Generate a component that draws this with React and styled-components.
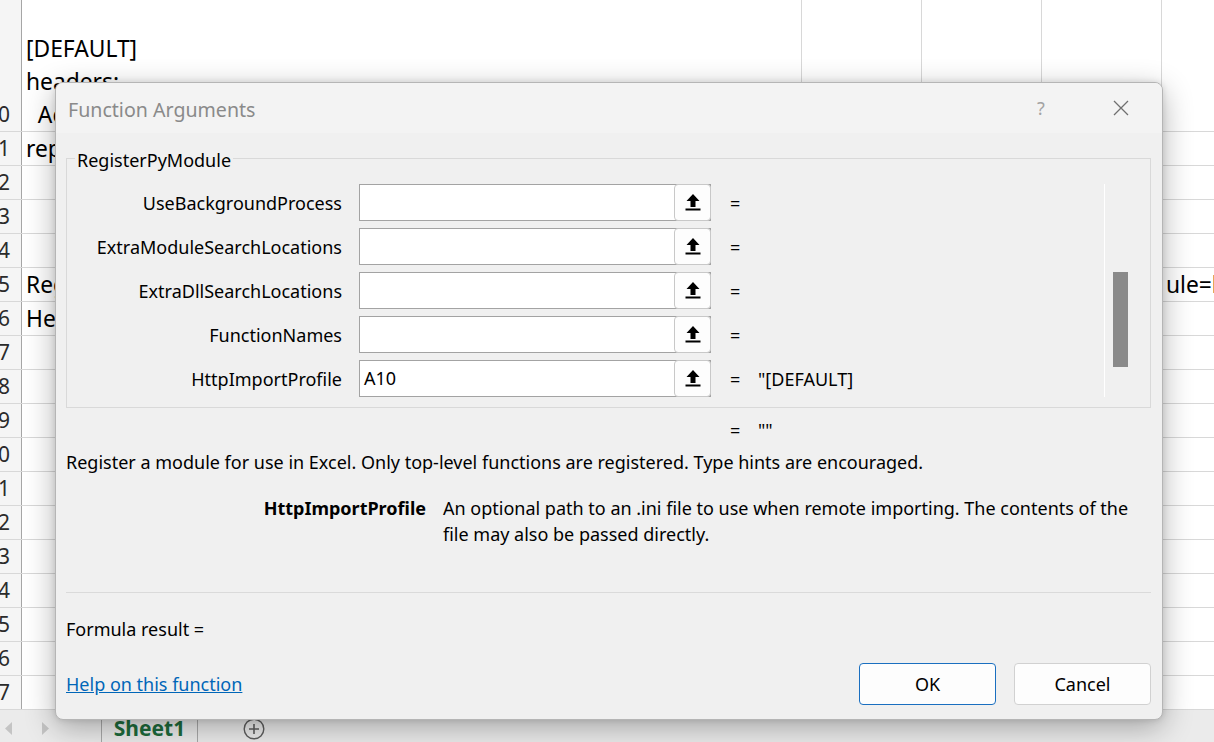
import React from 'react'
import styled, { createGlobalStyle } from 'styled-components'

const GlobalStyle = createGlobalStyle`
  html, body { margin: 0; padding: 0; }
  body { font-family: "Noto Sans", "Open Sans", sans-serif; background: #fff; }
  * { box-sizing: border-box; }
`

const sheetRows = [
    { n: 10, h: 132, a: '[DEFAULT]\nheaders:\n  Accept: text/plain' },
    { n: 11, a: 'replace = true' },
    { n: 12 },
    { n: 13 },
    { n: 14 },
    { n: 15, a: 'RegisterPyModule', e: 'ule=https://example.org/module.py' },
    { n: 16, a: 'Help' },
    { n: 17 }, { n: 18 }, { n: 19 }, { n: 20 }, { n: 21 }, { n: 22 },
    { n: 23 }, { n: 24 }, { n: 25 }, { n: 26 }, { n: 27 },
]

const args = [
    { name: 'UseBackgroundProcess', value: '', result: '' },
    { name: 'ExtraModuleSearchLocations', value: '', result: '' },
    { name: 'ExtraDllSearchLocations', value: '', result: '' },
    { name: 'FunctionNames', value: '', result: '' },
    { name: 'HttpImportProfile', value: 'A10', result: '"[DEFAULT]' },
]

function PickIcon() {
    return (
        <svg width="16" height="17" viewBox="0 0 16 17">
            <polygon points="8,0 14.5,7 10.5,7 10.5,13 5.5,13 5.5,7 1.5,7" fill="#000" />
            <rect x="0.5" y="14.5" width="15" height="2" fill="#000" />
        </svg>
    )
}

function CloseIcon() {
    return (
        <svg width="16" height="16" viewBox="0 0 16 16">
            <path d="M1 1 L15 15 M15 1 L1 15" stroke="#6f6f6f" strokeWidth="1.3" fill="none" />
        </svg>
    )
}

function App() {
    return (
        <Page>
            <GlobalStyle />
            <Sheet>
                {sheetRows.map((r) => (
                    <SheetRow key={r.n} $h={r.h || 34}>
                        <RowHead><span>{r.n}</span></RowHead>
                        <Cell $w={780}>{r.a}</Cell>
                        <Cell $w={120} />
                        <Cell $w={120} />
                        <Cell $w={120} />
                        <Cell $last>{r.e}</Cell>
                    </SheetRow>
                ))}
            </Sheet>
            <TabBar>
                <NavGroup>
                    <svg width="8" height="13" viewBox="0 0 8 13"><polygon points="7,0 7,13 0,6.5" fill="#c4c4c4" /></svg>
                    <svg width="8" height="13" viewBox="0 0 8 13"><polygon points="0,0 0,13 7,6.5" fill="#c4c4c4" /></svg>
                </NavGroup>
                <SheetTab>Sheet1</SheetTab>
                <AddSheet>
                    <svg width="22" height="22" viewBox="0 0 22 22">
                        <circle cx="11" cy="11" r="9.8" stroke="#5e5e5e" strokeWidth="1.4" fill="none" />
                        <path d="M11 6 V16 M6 11 H16" stroke="#5e5e5e" strokeWidth="1.6" />
                    </svg>
                </AddSheet>
            </TabBar>

            <Dialog>
                <TitleBar>
                    <Title>Function Arguments</Title>
                    <TitleButton $muted>?</TitleButton>
                    <TitleButton><CloseIcon /></TitleButton>
                </TitleBar>
                <Body>
                    <Group>
                        <legend>RegisterPyModule</legend>
                        <ArgArea>
                            <ArgList>
                                {args.map((a) => (
                                    <ArgRow key={a.name}>
                                        <ArgLabel>{a.name}</ArgLabel>
                                        <InputBox>
                                            <Field>{a.value}</Field>
                                            <PickButton><PickIcon /></PickButton>
                                        </InputBox>
                                        <Eq>=</Eq>
                                        <span>{a.result}</span>
                                    </ArgRow>
                                ))}
                            </ArgList>
                            <ScrollTrack>
                                <ScrollThumb />
                            </ScrollTrack>
                        </ArgArea>
                    </Group>
                    <ResultLine>
                        <Eq>=</Eq>
                        <span>""</span>
                    </ResultLine>
                    <Description>
                        Register a module for use in Excel. Only top-level functions are registered. Type hints are encouraged.
                    </Description>
                    <ArgHelp>
                        <HelpName>HttpImportProfile</HelpName>
                        <HelpText>
                            An optional path to an .ini file to use when remote importing. The contents of the file may also be passed directly.
                        </HelpText>
                    </ArgHelp>
                    <Divider />
                    <FormulaResult>Formula result =</FormulaResult>
                    <Footer>
                        <HelpLink href="#">Help on this function</HelpLink>
                        <Button $primary>OK</Button>
                        <Button>Cancel</Button>
                    </Footer>
                </Body>
            </Dialog>
        </Page>
    )
}

export default App

const Page = styled.div`
    position: relative;
    width: 1214px;
    height: 742px;
    overflow: hidden;
    display: flex;
    flex-direction: column;
    background: #fff;
`

const Sheet = styled.div`
    display: flex;
    flex-direction: column;
`

const SheetRow = styled.div`
    display: flex;
    height: ${(p) => p.$h}px;
    flex: none;
    border-bottom: 1px solid #d8d8d8;
`

const RowHead = styled.div`
    width: 22px;
    flex: none;
    display: flex;
    justify-content: flex-end;
    align-items: flex-end;
    overflow: hidden;
    padding-right: 11px;
    background: #f5f5f5;
    border-right: 1px solid #a6a6a6;
    font-size: 21px;
    line-height: 33px;
    color: #2b2b2b;
    white-space: nowrap;
`

const Cell = styled.div`
    width: ${(p) => (p.$w ? `${p.$w}px` : 'auto')};
    flex: ${(p) => (p.$last ? '1' : 'none')};
    display: flex;
    align-items: flex-end;
    padding: 0 4px;
    border-right: ${(p) => (p.$last ? 'none' : '1px solid #d8d8d8')};
    font-size: 22.8px;
    line-height: 33px;
    color: #000;
    white-space: pre;
    overflow: hidden;
`

const TabBar = styled.div`
    flex: 1;
    display: flex;
    align-items: stretch;
    background: #ebebeb;
`

const NavGroup = styled.div`
    width: 101px;
    display: flex;
    align-items: center;
    gap: 29px;
    padding: 4px 0 0 5px;
`

const SheetTab = styled.div`
    width: 97px;
    display: flex;
    align-items: center;
    justify-content: center;
    border-left: 1px solid #a9a9a9;
    border-right: 1px solid #a9a9a9;
    font-size: 21px;
    font-weight: 700;
    color: #1d6b3c;
    padding-top: 4px;
`

const AddSheet = styled.div`
    display: flex;
    align-items: center;
    margin-left: 45px;
    padding-top: 6px;
`

const Dialog = styled.div`
    position: absolute;
    left: 55px;
    top: 82px;
    width: 1108px;
    height: 638px;
    display: flex;
    flex-direction: column;
    background: #f0f0f0;
    border: 1px solid #b5b5b5;
    border-radius: 8px;
    box-shadow: 0 8px 30px rgba(0, 0, 0, 0.3), 0 0 6px rgba(0, 0, 0, 0.12);
    font-size: 18px;
    color: #000;
    overflow: hidden;
`

const TitleBar = styled.div`
    height: 50px;
    flex: none;
    display: flex;
    align-items: center;
    padding-left: 12px;
    background: #f3f3f3;
`

const Title = styled.div`
    flex: 1;
    font-size: 19.6px;
    color: #8a8a8a;
    padding-top: 2px;
`

const TitleButton = styled.div`
    width: 80px;
    height: 100%;
    display: flex;
    align-items: center;
    justify-content: center;
    font-size: 18px;
    color: ${(p) => (p.$muted ? '#a3a3a3' : '#6f6f6f')};
    &:last-child {
        margin-right: 1px;
    }
`

const Body = styled.div`
    flex: 1;
    display: flex;
    flex-direction: column;
    padding: 13px 11px 0 10px;
`

const Group = styled.fieldset`
    margin: 0;
    padding: 13px 21px 10px 8px;
    border: 1px solid #d9d9d9;
    min-width: 0;

    legend {
        padding: 3px 2px 0;
        line-height: 22px;
        font-size: 18px;
    }
`

const ArgArea = styled.div`
    display: flex;
    height: 213px;
`

const ArgList = styled.div`
    flex: 1;
    display: flex;
    flex-direction: column;
    gap: 7px;
`

const ArgRow = styled.div`
    display: flex;
    align-items: center;
    height: 37px;
`

const ArgLabel = styled.div`
    width: 267px;
    margin-right: 17px;
    text-align: right;
    white-space: nowrap;
`

const InputBox = styled.div`
    width: 352px;
    height: 37px;
    display: flex;
    background: #fff;
    border: 1px solid #a3a3a3;
`

const Field = styled.div`
    flex: 1;
    padding: 0 4px;
    line-height: 35px;
`

const PickButton = styled.div`
    width: 37px;
    height: 37px;
    margin: -1px -1px -1px 0;
    display: flex;
    align-items: center;
    justify-content: center;
    background: #fdfdfd;
    border: 1px solid #c8c8c8;
    border-radius: 4px;
`

const Eq = styled.span`
    width: 28px;
    margin-left: 19px;
    flex: none;
`

const ScrollTrack = styled.div`
    width: 25px;
    flex: none;
    border-left: 1px solid #ffffff;
    padding-left: 8px;
`

const ScrollThumb = styled.div`
    width: 15px;
    height: 95px;
    margin-top: 88px;
    background: #8a8a8a;
`

const ResultLine = styled.div`
    display: flex;
    margin-top: 11px;
    padding-left: 645px;
    line-height: 22px;
`

const Description = styled.div`
    margin-top: 10px;
    line-height: 22px;
`

const ArgHelp = styled.div`
    display: flex;
    margin-top: 22px;
    line-height: 26px;
`

const HelpName = styled.div`
    width: 360px;
    margin-right: 17px;
    text-align: right;
    font-weight: 700;
    flex: none;
`

const HelpText = styled.div`
    width: 700px;
`

const Divider = styled.div`
    height: 1px;
    margin-top: 45px;
    background: #dadada;
`

const FormulaResult = styled.div`
    margin-top: 25px;
    line-height: 22px;
`

const Footer = styled.div`
    display: flex;
    align-items: center;
    gap: 18px;
    margin-top: 23px;
    height: 42px;
`

const HelpLink = styled.a`
    flex: 1;
    color: #0066b8;
    text-decoration: underline;
`

const Button = styled.div`
    width: 137px;
    height: 42px;
    display: flex;
    align-items: center;
    justify-content: center;
    background: #fdfdfd;
    border: 1px solid ${(p) => (p.$primary ? '#1a6fc0' : '#d1d1d1')};
    border-radius: 4px;
`
